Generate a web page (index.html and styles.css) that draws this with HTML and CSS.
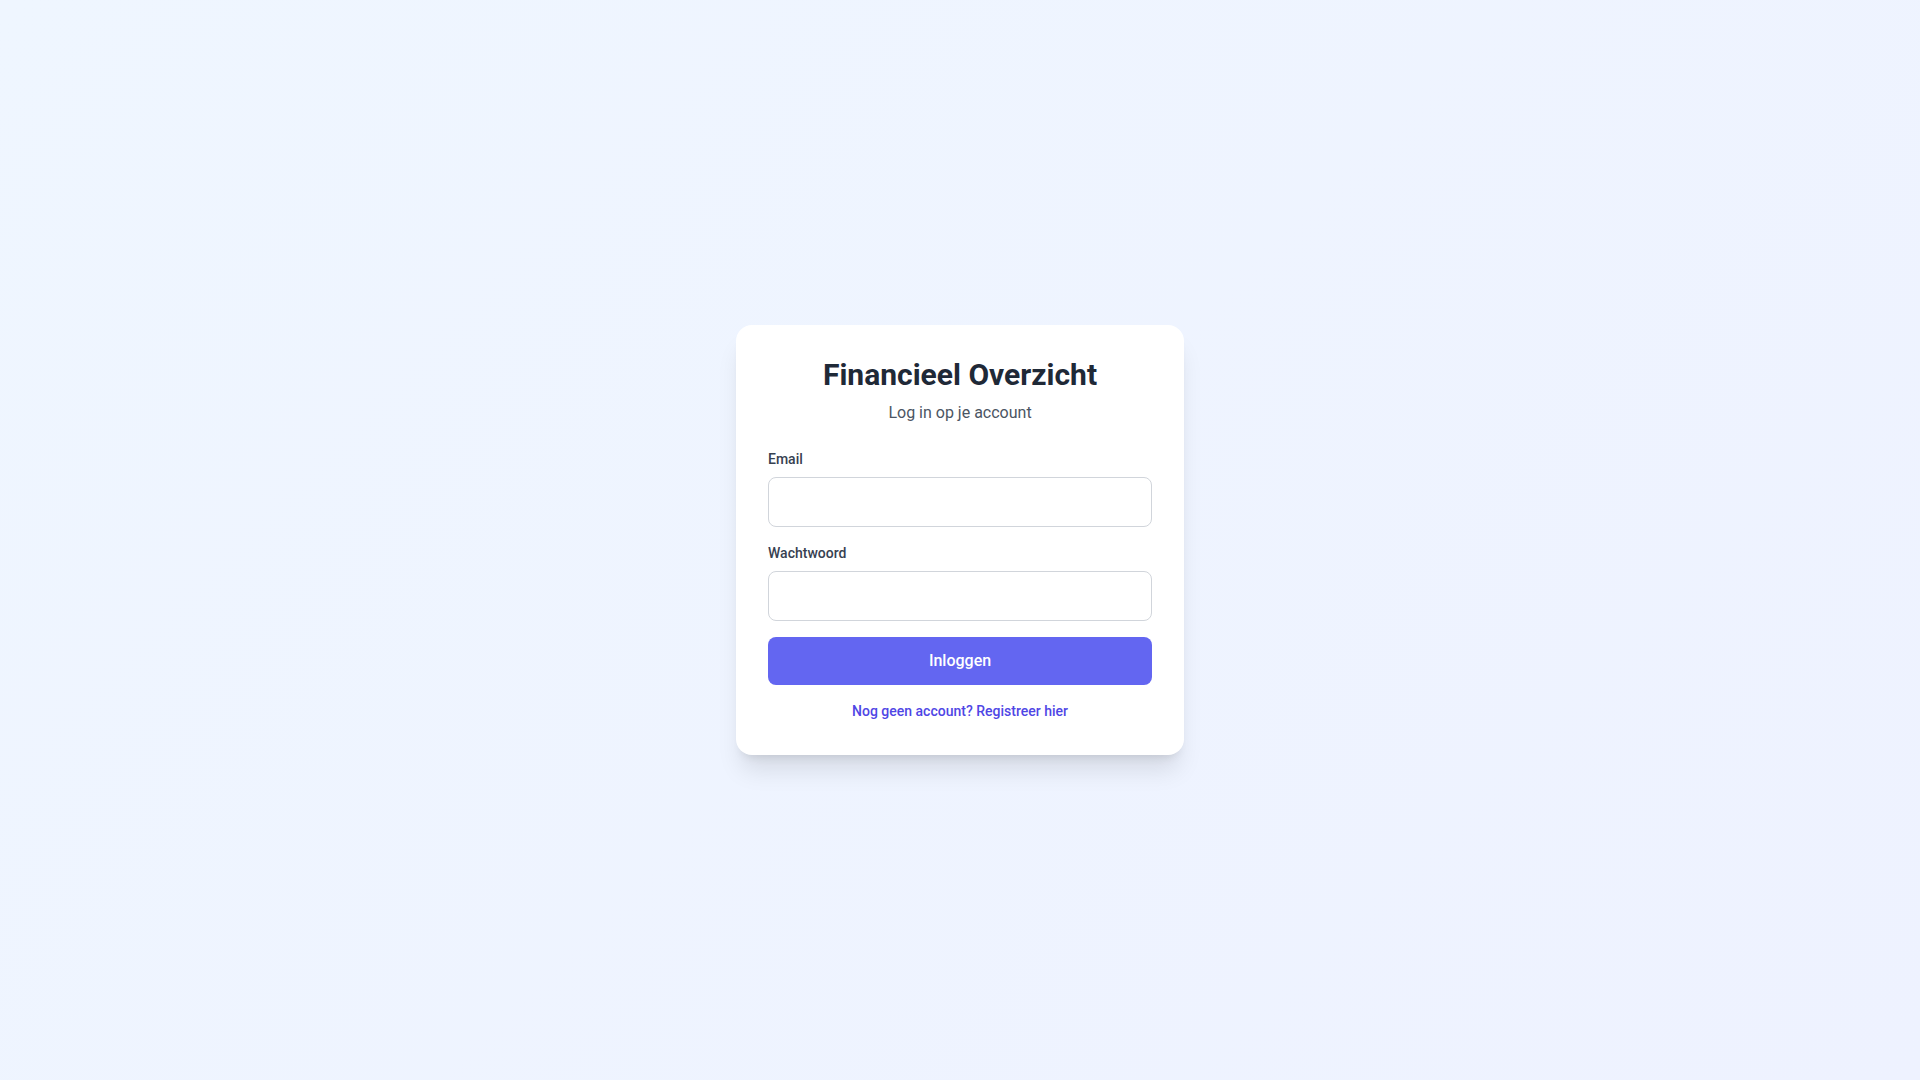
FILE: index.html
```html
<!DOCTYPE html>
<html lang="nl">
<head>
<meta charset="utf-8">
<title>Financieel Overzicht</title>
<link rel="stylesheet" href="styles.css">
</head>
<body>
<main class="page">
  <div class="card">
    <div class="header">
      <h1 class="title">Financieel Overzicht</h1>
      <p class="subtitle">Log in op je account</p>
    </div>
    <form class="form">
      <div class="field">
        <label class="label" for="email">Email</label>
        <input class="input" id="email" type="email">
      </div>
      <div class="field">
        <label class="label" for="password">Wachtwoord</label>
        <input class="input" id="password" type="password">
      </div>
      <button class="button" type="button">Inloggen</button>
    </form>
    <div class="footer">
      <a class="link" href="#">Nog geen account? Registreer hier</a>
    </div>
  </div>
</main>
</body>
</html>
```
FILE: styles.css
```css
* { box-sizing: border-box; }
html, body { margin: 0; padding: 0; }
body {
  font-family: Roboto, "Liberation Sans", Arial, sans-serif;
  background: linear-gradient(135deg, #eff6ff 0%, #eef2ff 100%);
  min-height: 100vh;
}
.page {
  min-height: 100vh;
  display: flex;
  align-items: center;
  justify-content: center;
}
.card {
  width: 448px;
  background: #ffffff;
  border-radius: 16px;
  padding: 32px 32px 34px;
  box-shadow: 0 20px 25px -5px rgba(0,0,0,0.1), 0 8px 10px -6px rgba(0,0,0,0.1);
}
.header { text-align: center; margin-bottom: 24px; }
.title {
  margin: 0;
  font-size: 30px;
  line-height: 36px;
  font-weight: 700;
  color: #1f2937;
}
.subtitle {
  margin: 8px 0 0;
  font-size: 16px;
  line-height: 24px;
  color: #4b5563;
}
.form { display: flex; flex-direction: column; gap: 16px; }
.field { display: flex; flex-direction: column; gap: 8px; }
.label {
  font-size: 14px;
  line-height: 20px;
  font-weight: 500;
  color: #374151;
}
.input {
  display: block;
  width: 100%;
  height: 50px;
  padding: 12px 16px;
  border: 1px solid #d1d5db;
  border-radius: 8px;
  font-size: 16px;
  font-family: inherit;
  background: #fff;
  outline: none;
}
.button {
  display: block;
  width: 100%;
  height: 48px;
  border: none;
  border-radius: 8px;
  background: #6366f1;
  color: #ffffff;
  font-family: inherit;
  font-size: 16px;
  line-height: 24px;
  font-weight: 500;
  cursor: pointer;
}
.footer { text-align: center; margin-top: 16px; line-height: 20px; }
.link {
  font-size: 14px;
  line-height: 20px;
  font-weight: 500;
  color: #4f46e5;
  text-decoration: none;
}
```
